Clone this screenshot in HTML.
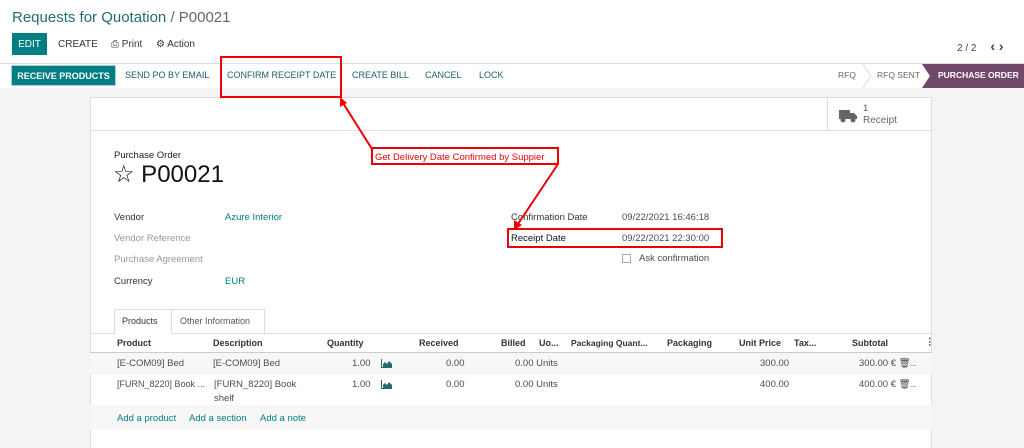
<!DOCTYPE html><html><head><style>
*{margin:0;padding:0;box-sizing:border-box}
body{width:1024px;height:448px;overflow:hidden;background:#fff;font-family:"Liberation Sans",sans-serif;font-size:9.5px;color:#4c4c4c;position:relative}
.a{position:absolute;white-space:nowrap}
.t{color:#017e84}
.b{font-weight:bold}
.h{font-size:9px;font-weight:bold;color:#333;top:338px}
.btn{top:70px;color:#1c5f63;font-size:9px}
</style></head><body>
<div class="a" style="left:12px;top:9px;font-size:15px;color:#246b6f">Requests for Quotation <span style="color:#666">/ P00021</span></div>
<div class="a" style="left:12px;top:33px;width:35px;height:22px;background:#017e84;color:#fff;font-size:10px;display:flex;align-items:center;justify-content:center">EDIT</div>
<div class="a" style="left:58px;top:39px;color:#333;font-size:10px">CREATE</div>
<div class="a" style="left:111px;top:39px;color:#333;font-size:10px">⎙ Print</div>
<div class="a" style="left:156px;top:39px;color:#333;font-size:10px">⚙ Action</div>
<div class="a" style="left:957px;top:38px;color:#444;font-size:10px">2 / 2 &nbsp;&nbsp;&nbsp; <b style="font-size:14px">‹ ›</b></div>
<div class="a" style="left:0;top:63px;width:1024px;height:1px;background:#ddd"></div>
<div class="a" style="left:0;top:88px;width:1024px;height:360px;background:#f4f4f5"></div>
<div class="a" style="left:11px;top:65px;width:105px;height:21px;background:#017e84;border:1px solid #a9d5d7;color:#fff;font-size:9px;display:flex;align-items:center;justify-content:center;font-weight:bold">RECEIVE PRODUCTS</div>
<div class="a btn" style="left:125px">SEND PO BY EMAIL</div>
<div class="a btn" style="left:227px">CONFIRM RECEIPT DATE</div>
<div class="a btn" style="left:352px">CREATE BILL</div>
<div class="a btn" style="left:425px">CANCEL</div>
<div class="a btn" style="left:479px">LOCK</div>
<div class="a" style="left:838px;top:70px;color:#666;font-size:8.5px">RFQ</div>
<div class="a" style="left:877px;top:70px;color:#666;font-size:8.5px">RFQ SENT</div>
<svg class="a" style="left:855px;top:64px" width="170" height="24"><path d="M8 0 L16 12 L8 24" fill="none" stroke="#ddd"/><path d="M67 0 H170 V24 H67 L75 12Z" fill="#71476b"/></svg>
<div class="a" style="left:938px;top:70px;color:#fff;font-size:8.5px;font-weight:bold">PURCHASE ORDER</div>
<div class="a" style="left:90px;top:97px;width:842px;height:351px;background:#fff;border:1px solid #ddd;border-bottom:none"></div>
<div class="a" style="left:90px;top:130px;width:842px;height:1px;background:#ddd"></div>
<div class="a" style="left:827px;top:98px;width:1px;height:32px;background:#ddd"></div>
<svg class="a" style="left:838px;top:108px" width="20" height="16"><path d="M1 2h11v9H1z M12 5h4l3 3v3h-7z" fill="#666"/><circle cx="5" cy="12" r="2.5" fill="#666"/><circle cx="15" cy="12" r="2.5" fill="#666"/></svg>
<div class="a" style="left:863px;top:103px;color:#71476b">1</div>
<div class="a" style="left:863px;top:115px;color:#666;font-size:10px">Receipt</div>
<div class="a" style="left:114px;top:150px;color:#222">Purchase Order</div>
<div class="a" style="left:113px;top:160px;font-size:24px;color:#111">☆ P00021</div>
<div class="a" style="left:114px;top:212px;color:#333">Vendor</div>
<div class="a t" style="left:225px;top:212px">Azure Interior</div>
<div class="a" style="left:114px;top:233px;color:#999">Vendor Reference</div>
<div class="a" style="left:114px;top:254px;color:#999">Purchase Agreement</div>
<div class="a" style="left:114px;top:276px;color:#333">Currency</div>
<div class="a t" style="left:225px;top:276px">EUR</div>
<div class="a" style="left:511px;top:212px;color:#333">Confirmation Date</div>
<div class="a" style="left:622px;top:212px">09/22/2021 16:46:18</div>
<div class="a" style="left:511px;top:233px;color:#111">Receipt Date</div>
<div class="a" style="left:622px;top:233px">09/22/2021 22:30:00</div>
<div class="a" style="left:622px;top:254px;width:9px;height:9px;border:1px solid #aaa"></div>
<div class="a" style="left:639px;top:253px">Ask confirmation</div>
<div class="a" style="left:90px;top:333px;width:842px;height:1px;background:#ddd"></div>
<div class="a" style="left:114px;top:309px;width:58px;height:25px;background:#fff;border:1px solid #ddd;border-bottom:none"></div>
<div class="a" style="left:122px;top:316px;color:#333;font-size:9px">Products</div>
<div class="a" style="left:171px;top:309px;width:94px;height:24px;border:1px solid #ddd;border-left:none;border-bottom:none"></div>
<div class="a" style="left:180px;top:316px;color:#555;font-size:9px">Other Information</div>
<div class="a" style="left:90px;top:352px;width:842px;height:1px;background:#ccc"></div>
<div class="a" style="left:90px;top:353px;width:842px;height:20px;background:#f7f7f7"></div>
<div class="a" style="left:90px;top:373px;width:842px;height:1px;background:#eee"></div>
<div class="a" style="left:90px;top:405px;width:842px;height:25px;background:#f7f7f7"></div>
<div class="a h" style="left:117px">Product</div>
<div class="a h" style="left:213px">Description</div>
<div class="a h" style="left:327px">Quantity</div>
<div class="a h" style="left:419px">Received</div>
<div class="a h" style="left:501px">Billed</div>
<div class="a h" style="left:539px">Uo...</div>
<div class="a h" style="left:571px;font-size:8.5px">Packaging Quant...</div>
<div class="a h" style="left:667px">Packaging</div>
<div class="a h" style="left:739px">Unit Price</div>
<div class="a h" style="left:794px">Tax...</div>
<div class="a h" style="left:852px">Subtotal</div>
<div class="a b" style="left:925px;top:337px;color:#333">⋮</div>
<div class="a" style="left:117px;top:358px">[E-COM09] Bed</div>
<div class="a" style="left:213px;top:358px">[E-COM09] Bed</div>
<div class="a" style="left:117px;top:379px;font-size:9px">[FURN_8220] Book ...</div>
<div class="a" style="left:214px;top:379px">[FURN_8220] Book</div>
<div class="a" style="left:214px;top:393px">shelf</div>
<div class="a" style="left:352px;top:358px">1.00</div><div class="a" style="left:352px;top:379px">1.00</div>
<svg class="a" style="left:381px;top:359px" width="11" height="9"><path d="M0 9V0h1v8h10v1z M2 8V5l2-2 2 2 2-3 3 3v3z" fill="#246b6f"/></svg>
<svg class="a" style="left:381px;top:380px" width="11" height="9"><path d="M0 9V0h1v8h10v1z M2 8V5l2-2 2 2 2-3 3 3v3z" fill="#246b6f"/></svg>
<div class="a" style="left:446px;top:358px">0.00</div><div class="a" style="left:446px;top:379px">0.00</div>
<div class="a" style="left:515px;top:358px">0.00 Units</div><div class="a" style="left:515px;top:379px">0.00 Units</div>
<div class="a" style="left:760px;top:358px">300.00</div><div class="a" style="left:760px;top:379px">400.00</div>
<div class="a" style="left:859px;top:358px">300.00 € 🗑..</div><div class="a" style="left:859px;top:379px">400.00 € 🗑..</div>
<div class="a t" style="left:117px;top:413px">Add a product</div>
<div class="a t" style="left:189px;top:413px">Add a section</div>
<div class="a t" style="left:260px;top:413px">Add a note</div>
<svg class="a" style="left:0;top:0" width="1024" height="448">
<rect x="221" y="57" width="120" height="40" fill="none" stroke="#e00" stroke-width="2"/>
<rect x="508" y="229" width="214" height="18" fill="none" stroke="#e00" stroke-width="2"/>
<rect x="372" y="148" width="186" height="16" fill="#fff" stroke="#e00" stroke-width="2"/>
<path d="M372 149 L343 103" stroke="#e00" stroke-width="2"/>
<path d="M340 97 L340 107 L347 103Z" fill="#e00"/>
<path d="M558 164 L518 224" stroke="#e00" stroke-width="2"/>
<path d="M514 230 L514 220 L522 225Z" fill="#e00"/>
<text x="375" y="160" font-size="9.5" fill="#e00" font-family="Liberation Sans">Get Delivery Date Confirmed by Suppier</text>
</svg>
</body></html>
